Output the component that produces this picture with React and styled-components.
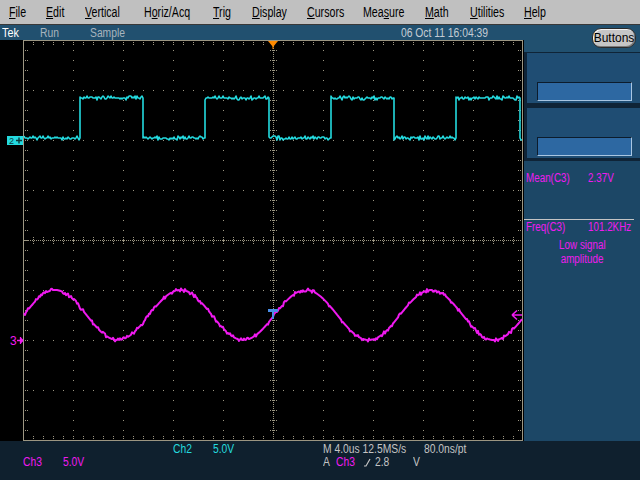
import React, { useMemo } from "react"
import styled, { createGlobalStyle } from "styled-components"

const FONT = `"Liberation Sans", Arial, sans-serif`
const CYAN = "#24dadf"
const MAGENTA = "#f01af0"
const GRID = "#9c9682"

const GlobalStyle = createGlobalStyle`
  html, body { margin: 0; padding: 0; background: #000; }
  body { width: 640px; height: 480px; overflow: hidden; font-family: ${FONT}; }
`

// the scope's bitmap font is narrow: squeeze the text horizontally
const Narrow = styled.span`
  display: inline-block;
  white-space: nowrap;
  width: ${(p) => (p.$w ? `${p.$w}px` : "auto")};
  color: ${(p) => p.$color || "inherit"};
  transform: scaleX(${(p) => p.$s || 0.82});
  transform-origin: ${(p) => (p.$center ? "center" : "left")} center;
`

const Screen = styled.div`
  position: relative;
  width: 640px;
  height: 480px;
  display: flex;
  flex-direction: column;
  background: #000;
`

const MenuBar = styled.div`
  height: 24px;
  flex: none;
  display: flex;
  align-items: center;
  padding-left: 9px;
  background: #c0c0c0;
  border-bottom: 1px solid #383838;
  font-size: 14px;
  color: #000;
`

const MenuItem = styled.div`
  width: ${(p) => p.$w}px;
  flex: none;
  white-space: nowrap;
  u { text-decoration-thickness: 1px; text-underline-offset: 1px; }
`

const StatusBar = styled.div`
  height: 15px;
  flex: none;
  display: flex;
  align-items: center;
  padding-left: 2px;
  background: #21506f;
  font-size: 12px;
  color: #a8b4be;
`

const StatusItem = styled.div`
  width: ${(p) => (p.$w ? `${p.$w}px` : "auto")};
  flex: none;
  color: ${(p) => p.$color || "inherit"};
  white-space: nowrap;
`

const PillButton = styled.div`
  position: absolute;
  left: 592px;
  top: 28px;
  width: 44px;
  height: 20px;
  box-sizing: border-box;
  border: 1px solid #2a2a2a;
  border-radius: 9px;
  background: #c6c6c6;
  box-shadow: inset 1px 1px 0 #f4f4f4, inset -1px -1px 0 #7c7c7c;
  display: flex;
  align-items: center;
  justify-content: center;
  font-size: 12px;
  color: #000;
`

const Main = styled.div`
  height: 401px;
  flex: none;
  display: flex;
`

const Display = styled.svg`
  width: 524px;
  height: 401px;
  flex: none;
  display: block;
  background: #000;
`

const RightPanel = styled.div`
  flex: 1;
  display: flex;
  flex-direction: column;
  background: #1c4766;
  font-size: 12px;
  color: ${MAGENTA};
`

const TopStrip = styled.div`
  height: 12px;
  background: #21506f;
`

const CardStack = styled.div`
  display: flex;
  flex-direction: column;
  gap: 5px;
  padding: 1px 0 3px 3px;
  background: #0f2437;
`

const Card = styled.div`
  height: 50px;
  box-sizing: border-box;
  display: flex;
  flex-direction: column;
  justify-content: flex-end;
  padding: 0 9px 2px 10px;
  background: #1f4d73;
`

const Field = styled.div`
  height: 19px;
  box-sizing: border-box;
  background: #2d68a2;
  border-top: 1px solid #0c1c2c;
  border-left: 1px solid #0c1c2c;
  border-right: 1px solid #a9c6e2;
  border-bottom: 1px solid #a9c6e2;
`

const MeasRow = styled.div`
  display: grid;
  grid-template-columns: 62px 1fr;
  padding-left: 2px;
  line-height: 14px;
  margin-top: ${(p) => p.$mt || 0}px;
`

const Divider = styled.div`
  height: 1px;
  width: 110px;
  background: #c4c4c4;
  margin-top: ${(p) => p.$mt}px;
`

const Note = styled.div`
  text-align: center;
  line-height: 14px;
  margin-top: ${(p) => p.$mt || 0}px;
`

const Readout = styled.div`
  flex: 1;
  display: grid;
  grid-template-columns: 23px 40px 110px 40px 110px 1fr;
  grid-auto-rows: 13px;
  align-content: start;
  padding-top: 1px;
  background: #0f202e;
  font-size: 12px;
  line-height: 12px;
  color: #c4c4c4;
`

const Cell = styled.div`
  grid-column: ${(p) => p.$col};
  grid-row: ${(p) => p.$row};
  color: ${(p) => p.$color || "inherit"};
  white-space: nowrap;
  display: flex;
  align-items: center;
  overflow: hidden;
`

function makeRand(seed) {
  let s = seed
  return () => {
    s = (s * 16807) % 2147483647
    return s / 2147483647
  }
}

function squarePath() {
  const r = makeRand(91)
  const lo = 98
  const hi = 58
  const rises = [79.5, 205, 330.5, 456]
  const falls = [143, 268.5, 394, 519.5]
  const state = (x) => rises.some((rx, i) => x >= rx && x < falls[i])
  let d = ""
  let prev = null
  for (let x = 24; x <= 522; x++) {
    const s = state(x)
    const n = r()
    const dy = n < 0.1 ? -2 : n < 0.2 ? 2 : n < 0.38 ? -1 : n < 0.56 ? 1 : 0
    const y = (s ? hi : lo) + dy
    if (prev === null) d += `M${x} ${y}`
    else if (prev !== s) d += `L${x} ${prev ? hi : lo}L${x} ${y}`
    else d += `L${x} ${y}`
    prev = s
  }
  return d
}

function sinePath() {
  const r = makeRand(17)
  let d = ""
  for (let x = 24; x <= 522; x++) {
    const n = r()
    const dy = n < 0.15 ? -1.5 : n < 0.3 ? 1.5 : 0
    const y = 275 - 25 * Math.sin((2 * Math.PI * (x - 23.75)) / 125.4) + dy
    d += `${x === 24 ? "M" : "L"}${x} ${y.toFixed(1)}`
  }
  return d
}

const dot = (x, y) => `M${x} ${y}h1v1h-1z`

function gridDots() {
  let d = ""
  for (let k = 1; k <= 9; k++) {
    if (k === 5) continue
    const x = 23 + 50 * k
    for (let y = 10; y < 400; y += 10) d += dot(x, y)
  }
  for (let k = 1; k <= 7; k++) {
    if (k === 4) continue
    const y = 50 * k
    for (let x = 33; x < 523; x += 10) d += dot(x, y)
  }
  // centre cross
  for (let x = 24; x < 522; x += 2) d += dot(x, 200)
  for (let y = 2; y < 400; y += 2) d += dot(273, y)
  for (let x = 33; x < 523; x += 10) {
    ;[197, 199, 201, 203].forEach((y) => (d += dot(x, y)))
  }
  for (let y = 10; y < 400; y += 10) {
    ;[270, 272, 274, 276].forEach((x) => (d += dot(x, y)))
  }
  // border ticks
  for (let x = 33; x < 523; x += 10) {
    d += dot(x, 2) + dot(x, 4) + dot(x, 396) + dot(x, 398)
  }
  for (let y = 10; y < 400; y += 10) {
    d += dot(25, y) + dot(27, y) + dot(518, y) + dot(520, y)
  }
  return d
}

function Scope() {
  const grid = useMemo(gridDots, [])
  const ch2 = useMemo(squarePath, [])
  const ch3 = useMemo(sinePath, [])
  return (
    <Display viewBox="0 0 524 401">
      <path d={grid} fill={GRID} shapeRendering="crispEdges" />
      <rect x="23.5" y="0.5" width="499" height="400" fill="none" stroke={GRID} shapeRendering="crispEdges" />

      {/* trigger position */}
      <polygon points="268,1 278,1 273,7" fill="#ff8a00" />
      <rect x="272.5" y="6" width="1" height="3" fill="#ff8a00" />

      <path d={ch2} fill="none" stroke={CYAN} strokeWidth="1.6" strokeLinejoin="round" />
      <path d={ch3} fill="none" stroke={MAGENTA} strokeWidth="2" strokeLinejoin="round" />

      {/* trigger point T */}
      <rect x="268" y="269" width="10" height="3" fill="#4a8ee8" />
      <rect x="272" y="269" width="2" height="10" fill="#4a8ee8" />

      {/* trigger level arrow */}
      <path d="M512 275H522M512 275L517 270.5M512 275L517 279.5" stroke={MAGENTA} strokeWidth="1.6" fill="none" />

      {/* ch2 ground marker */}
      <rect x="7" y="96" width="16" height="9" fill={CYAN} />
      <text x="9" y="104" fontSize="9" fontFamily={FONT} fill="#0c3a3c">2</text>
      <path d="M16 100.5H22M19 97.5V103.5" stroke="#0c3a3c" strokeWidth="1.4" />

      {/* ch3 ground marker */}
      <text x="10" y="305" fontSize="12" fontFamily={FONT} fill={MAGENTA}>3</text>
      <path d="M17 300.5H23M20.5 297V304M23 300.5L20.5 298M23 300.5L20.5 303" stroke={MAGENTA} strokeWidth="1.3" fill="none" />
    </Display>
  )
}

const SlopeIcon = () => (
  <svg width="12" height="10" viewBox="0 0 12 10" style={{ flex: "none" }}>
    <path d="M1 9H3L7 2" stroke="#c4c4c4" strokeWidth="1.2" fill="none" />
  </svg>
)

const menu = [
  { pre: "", u: "F", post: "ile", w: 37 },
  { pre: "", u: "E", post: "dit", w: 39 },
  { pre: "", u: "V", post: "ertical", w: 59 },
  { pre: "H", u: "o", post: "riz/Acq", w: 69 },
  { pre: "", u: "T", post: "rig", w: 39 },
  { pre: "", u: "D", post: "isplay", w: 55 },
  { pre: "", u: "C", post: "ursors", w: 56 },
  { pre: "Mea", u: "s", post: "ure", w: 62 },
  { pre: "", u: "M", post: "ath", w: 45 },
  { pre: "", u: "U", post: "tilities", w: 54 },
  { pre: "", u: "H", post: "elp", w: 40 },
]

export default function App() {
  return (
    <Screen>
      <GlobalStyle />
      <MenuBar>
        {menu.map((m) => (
          <MenuItem key={m.pre + m.u + m.post} $w={m.w}>
            <Narrow $s={0.76}>
              {m.pre}
              <u>{m.u}</u>
              {m.post}
            </Narrow>
          </MenuItem>
        ))}
      </MenuBar>

      <StatusBar>
        <StatusItem $w={38} $color="#ffffff"><Narrow $s={0.9}>Tek</Narrow></StatusItem>
        <StatusItem $w={50}><Narrow $s={0.86}>Run</Narrow></StatusItem>
        <StatusItem $w={311}><Narrow $s={0.86}>Sample</Narrow></StatusItem>
        <StatusItem $color="#c4ccd4"><Narrow $s={0.86}>06 Oct 11 16:04:39</Narrow></StatusItem>
      </StatusBar>

      <Main>
        <Scope />
        <RightPanel>
          <TopStrip />
          <CardStack>
            <Card>
              <Field />
            </Card>
            <Card>
              <Field />
            </Card>
          </CardStack>
          <MeasRow $mt={10}>
            <Narrow>Mean(C3)</Narrow>
            <Narrow>2.37V</Narrow>
          </MeasRow>
          <Divider $mt={34} />
          <MeasRow>
            <Narrow>Freq(C3)</Narrow>
            <Narrow>101.2KHz</Narrow>
          </MeasRow>
          <Note $mt={4}><Narrow $center>Low signal</Narrow></Note>
          <Note><Narrow $center>amplitude</Narrow></Note>
        </RightPanel>
      </Main>

      <Readout>
        <Cell $col={4} $row={1} $color={CYAN}><Narrow $s={0.86}>Ch2</Narrow></Cell>
        <Cell $col={5} $row={1} $color={CYAN}><Narrow $s={0.86}>5.0V</Narrow></Cell>
        <Cell $col={6} $row={1}>
          <Narrow $s={0.86} $w={101}>M 4.0us 12.5MS/s</Narrow>
          <Narrow $s={0.86}>80.0ns/pt</Narrow>
        </Cell>
        <Cell $col={2} $row={2} $color={MAGENTA}><Narrow $s={0.86}>Ch3</Narrow></Cell>
        <Cell $col={3} $row={2} $color={MAGENTA}><Narrow $s={0.86}>5.0V</Narrow></Cell>
        <Cell $col={6} $row={2}>
          <Narrow $s={0.86} $w={13}>A</Narrow>
          <Narrow $s={0.86} $w={27} $color={MAGENTA}>Ch3</Narrow>
          <SlopeIcon />
          <Narrow $s={0.86} $w={38}>2.8</Narrow>
          <Narrow $s={0.86}>V</Narrow>
        </Cell>
      </Readout>

      <PillButton>Buttons</PillButton>
    </Screen>
  )
}
